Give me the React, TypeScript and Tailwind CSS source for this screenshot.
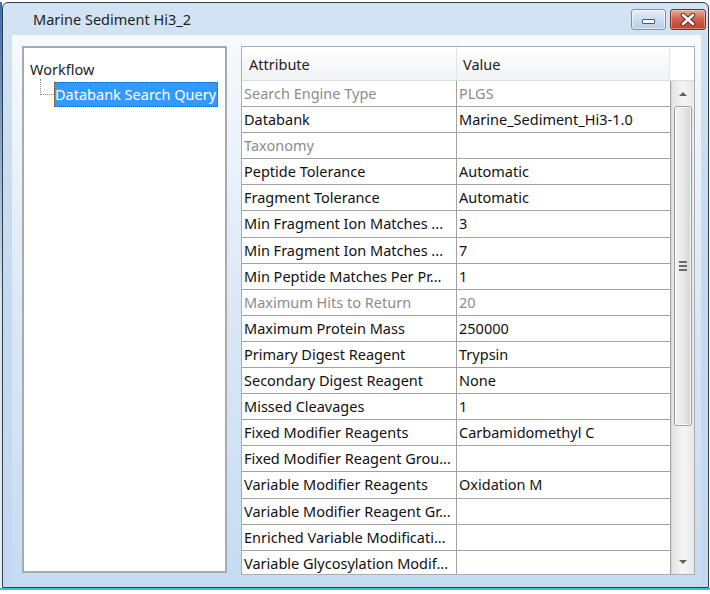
import React from 'react';

type Row = { attr: string; value: string; disabled?: boolean };

const rows: Row[] = [
  { attr: 'Search Engine Type', value: 'PLGS', disabled: true },
  { attr: 'Databank', value: 'Marine_Sediment_Hi3-1.0' },
  { attr: 'Taxonomy', value: '', disabled: true },
  { attr: 'Peptide Tolerance', value: 'Automatic' },
  { attr: 'Fragment Tolerance', value: 'Automatic' },
  { attr: 'Min Fragment Ion Matches ...', value: '3' },
  { attr: 'Min Fragment Ion Matches ...', value: '7' },
  { attr: 'Min Peptide Matches Per Pr...', value: '1' },
  { attr: 'Maximum Hits to Return', value: '20', disabled: true },
  { attr: 'Maximum Protein Mass', value: '250000' },
  { attr: 'Primary Digest Reagent', value: 'Trypsin' },
  { attr: 'Secondary Digest Reagent', value: 'None' },
  { attr: 'Missed Cleavages', value: '1' },
  { attr: 'Fixed Modifier Reagents', value: 'Carbamidomethyl C' },
  { attr: 'Fixed Modifier Reagent Grou...', value: '' },
  { attr: 'Variable Modifier Reagents', value: 'Oxidation M' },
  { attr: 'Variable Modifier Reagent Gr...', value: '' },
  { attr: 'Enriched Variable Modificati...', value: '' },
  { attr: 'Variable Glycosylation Modif...', value: '' },
];

function CaptionButtons() {
  return (
    <div className="flex gap-[4px] pt-[6px] pr-[2px]">
      <div className="w-[35px] h-[21px] rounded-[3px] border border-[#7d93ab] bg-gradient-to-b from-[#e6eff8] via-[#cbdcee] to-[#b9cfe6] flex items-center justify-center shadow-[inset_0_0_0_1px_rgba(255,255,255,0.6)]">
        <div className="w-[13px] h-[5px] bg-white border border-[#4a5a6c] rounded-[1px] mt-[4px]" />
      </div>
      <div className="w-[36px] h-[21px] rounded-[3px] border border-[#7a2f24] bg-gradient-to-b from-[#e9a99c] via-[#d0604c] to-[#c0422d] flex items-center justify-center shadow-[inset_0_0_0_1px_rgba(255,255,255,0.35)]">
        <svg width="16" height="13" viewBox="0 0 16 13">
          <path d="M3 2 L13 11 M13 2 L3 11" stroke="#5a2a22" strokeWidth="4.5" strokeLinecap="round" />
          <path d="M3 2 L13 11 M13 2 L3 11" stroke="#ffffff" strokeWidth="2.6" strokeLinecap="round" />
        </svg>
      </div>
    </div>
  );
}

function TreePanel() {
  return (
    <div className="w-[205px] h-[527px] border-2 border-[#a6abb1] bg-white pt-[12px] pl-[6px]">
      <div className="text-[14.5px] leading-[18px] text-[#1e1e1e]">Workflow</div>
      <div className="flex items-start mt-[1px]">
        <div className="ml-[10px] w-[14px] h-[16px] border-l border-b border-dotted border-[#8a8a8a]" />
        <div className="mt-[3px] w-[164px] h-[25px] bg-[#3399ff] border border-dotted border-[#7a4a10] text-white text-[14.5px] leading-[23px] whitespace-nowrap overflow-hidden">
          Databank Search Query
        </div>
      </div>
    </div>
  );
}

function ScrollBar() {
  return (
    <div className="w-[23px] flex flex-col items-center bg-gradient-to-r from-[#e4e4e4] via-[#f4f4f4] to-[#e9e9e9] border-l border-[#d6d6d6]">
      <div className="h-[25px] flex items-center justify-center">
        <div className="w-0 h-0 border-l-[4px] border-r-[4px] border-b-[4px] border-l-transparent border-r-transparent border-b-[#606060]" />
      </div>
      <div className="w-[18px] h-[320px] rounded-[3px] border border-[#9c9c9c] bg-gradient-to-r from-[#f3f3f3] via-[#e8e8e8] to-[#d4d4d4] flex flex-col items-center justify-center gap-[2px] shadow-[inset_0_0_0_1px_rgba(255,255,255,0.8)]">
        <div className="w-[8px] h-[2px] bg-[#6a6a6a]" />
        <div className="w-[8px] h-[2px] bg-[#6a6a6a]" />
        <div className="w-[8px] h-[2px] bg-[#6a6a6a]" />
      </div>
      <div className="flex-1" />
      <div className="h-[24px] flex items-center justify-center">
        <div className="w-0 h-0 border-l-[4px] border-r-[4px] border-t-[4px] border-l-transparent border-r-transparent border-t-[#606060]" />
      </div>
    </div>
  );
}

function PropertyGrid() {
  return (
    <div className="w-[454px] h-[529px] border border-[#a9adb2] bg-white flex flex-col overflow-hidden">
      <div className="h-[34px] flex bg-gradient-to-b from-[#ffffff] to-[#f1f2f4] border-b border-[#dcdcdc] shrink-0 text-[14.5px] text-[#1e1e1e]">
        <div className="w-[215px] pl-[7px] pt-[7px] border-r border-[#e4e4e4]">Attribute</div>
        <div className="w-[213px] pl-[6px] pt-[7px] border-r border-[#e4e4e4]">Value</div>
        <div className="flex-1 bg-white" />
      </div>
      <div className="flex flex-1 min-h-0">
        <div className="w-[428px] flex flex-col overflow-hidden">
          {rows.map((r, i) => (
            <div key={i} className="h-[26.1px] shrink-0 flex border-b border-[#a2a2a2] text-[14.5px] leading-[25px]">
              <div className={`w-[215px] pl-[2px] border-r border-[#a2a2a2] whitespace-nowrap overflow-hidden ${r.disabled ? 'text-[#8c8c8c]' : 'text-[#111111]'}`}>
                {r.attr}
              </div>
              <div className={`flex-1 pl-[2px] whitespace-nowrap ${r.disabled ? 'text-[#8c8c8c]' : 'text-[#111111]'}`}>{r.value}</div>
            </div>
          ))}
        </div>
        <div className="border-l border-[#a2a2a2]" />
        <ScrollBar />
      </div>
    </div>
  );
}

export default function App() {
  return (
    <div className="w-[710px] h-[594px] bg-white overflow-hidden flex flex-col" style={{ fontFamily: '"Noto Sans", "Open Sans", sans-serif' }}>
      <div className="flex pt-[2px]">
        <div className="w-[2px] h-[586px] bg-gradient-to-b from-[#3b6ea8] via-[#d8e4ee] to-[#e8eef3]" />
        <div className="w-[707px] h-[586px] border border-[#2f3d4c] rounded-t-[6px] bg-gradient-to-b from-[#d3e3f3] via-[#c4daef] to-[#c2d9ef] flex flex-col">
          <div className="h-[32px] shrink-0 flex items-start justify-between pl-[30px]">
            <div className="text-[14.5px] text-[#1e1e1e] pt-[6px]">Marine Sediment Hi3_2</div>
            <CaptionButtons />
          </div>
          <div className="flex-1 pl-[9px] pr-[7px] pb-[2px]">
            <div className="h-full bg-gradient-to-b from-[#f7fafd] via-[#dbe8f5] to-[#c5dcf1] pt-[11px] pl-[10px] flex items-start gap-[14px]">
              <TreePanel />
              <PropertyGrid />
            </div>
          </div>
        </div>
      </div>
      <div className="h-[2px] bg-[#3cc0df]" />
    </div>
  );
}
